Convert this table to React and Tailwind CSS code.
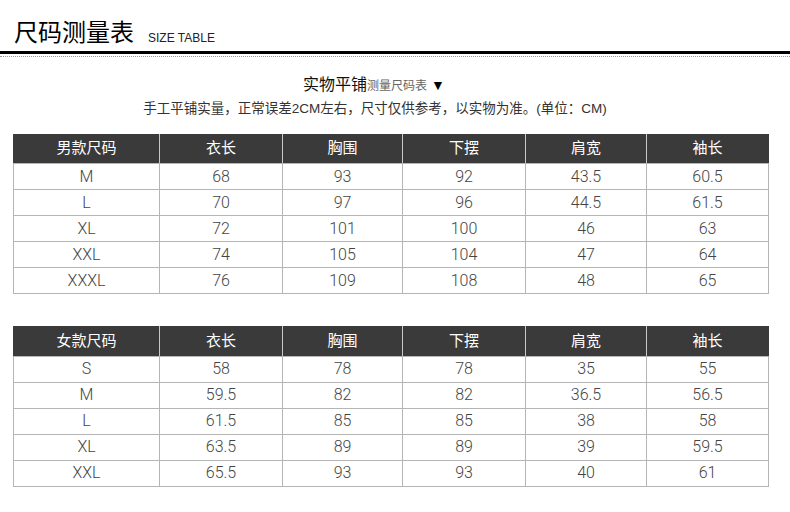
import React from "react";

const cols = ["w-[146px]", "w-[123px]", "w-[120px]", "w-[123px]", "w-[121px]", "w-[122px]"];

const men = [
  ["M", "68", "93", "92", "43.5", "60.5"],
  ["L", "70", "97", "96", "44.5", "61.5"],
  ["XL", "72", "101", "100", "46", "63"],
  ["XXL", "74", "105", "104", "47", "64"],
  ["XXXL", "76", "109", "108", "48", "65"],
];

const women = [
  ["S", "58", "78", "78", "35", "55"],
  ["M", "59.5", "82", "82", "36.5", "56.5"],
  ["L", "61.5", "85", "85", "38", "58"],
  ["XL", "63.5", "89", "89", "39", "59.5"],
  ["XXL", "65.5", "93", "93", "40", "61"],
];

const SizeTable = ({ first, rows }) => {
  const head = [first, "衣长", "胸围", "下摆", "肩宽", "袖长"];
  return (
    <table className="ml-[13px] border-collapse table-fixed">
      <colgroup>
        {cols.map((c, i) => (
          <col key={i} className={c} />
        ))}
      </colgroup>
      <thead>
        <tr className="h-[30px] bg-[#3a3a3a]">
          {head.map((h, i) => (
            <th
              key={i}
              className="font-normal text-white text-[15px] border-x border-[#c8c8c8] first:border-l-[#3a3a3a] last:border-r-[#3a3a3a] border-b border-b-[#b5b5b5] p-0"
            >
              {h}
            </th>
          ))}
        </tr>
      </thead>
      <tbody>
        {rows.map((r, i) => (
          <tr key={i} className="h-[26px]">
            {r.map((v, j) => (
              <td
                key={j}
                className="border border-[#b5b5b5] text-center text-[16px] text-[#444] font-light p-0 leading-none"
                style={{ fontFamily: 'Roboto, "Noto Sans CJK SC", sans-serif' }}
              >
                {v}
              </td>
            ))}
          </tr>
        ))}
      </tbody>
    </table>
  );
};

export default function App() {
  return (
    <div
      className="w-[790px] h-[512px] bg-white overflow-hidden"
      style={{ fontFamily: '"Liberation Sans", "Noto Sans CJK SC", sans-serif' }}
    >
      <div className="flex items-end h-[49px] pl-[14px] pb-[4px]">
        <span className="text-[24px] leading-none text-black">尺码测量表</span>
        <span className="ml-[14px] text-[12px] leading-none text-[#222] mb-[1px]">SIZE TABLE</span>
      </div>
      <div className="h-[3px] bg-black mt-[2px]" />
      <div className="mt-[2px] border-t border-dotted border-[#999]" />

      <div className="mt-[20px] flex justify-center items-end pr-[42px]">
        <span className="text-[16px] leading-none text-[#111]">实物平铺</span>
        <span className="text-[12px] leading-none text-[#666] mb-[1px]">测量尺码表</span>
        <span className="text-[14px] leading-none text-black ml-[4px] mb-[1px]">▼</span>
      </div>
      <div className="mt-[9px] text-center text-[13.5px] leading-none text-[#333] pr-[40px]">
        手工平铺实量，正常误差2CM左右，尺寸仅供参考，以实物为准。(单位：CM)
      </div>

      <div className="mt-[18px]">
        <SizeTable first="男款尺码" rows={men} />
      </div>
      <div className="mt-[32px]">
        <SizeTable first="女款尺码" rows={women} />
      </div>
    </div>
  );
}
